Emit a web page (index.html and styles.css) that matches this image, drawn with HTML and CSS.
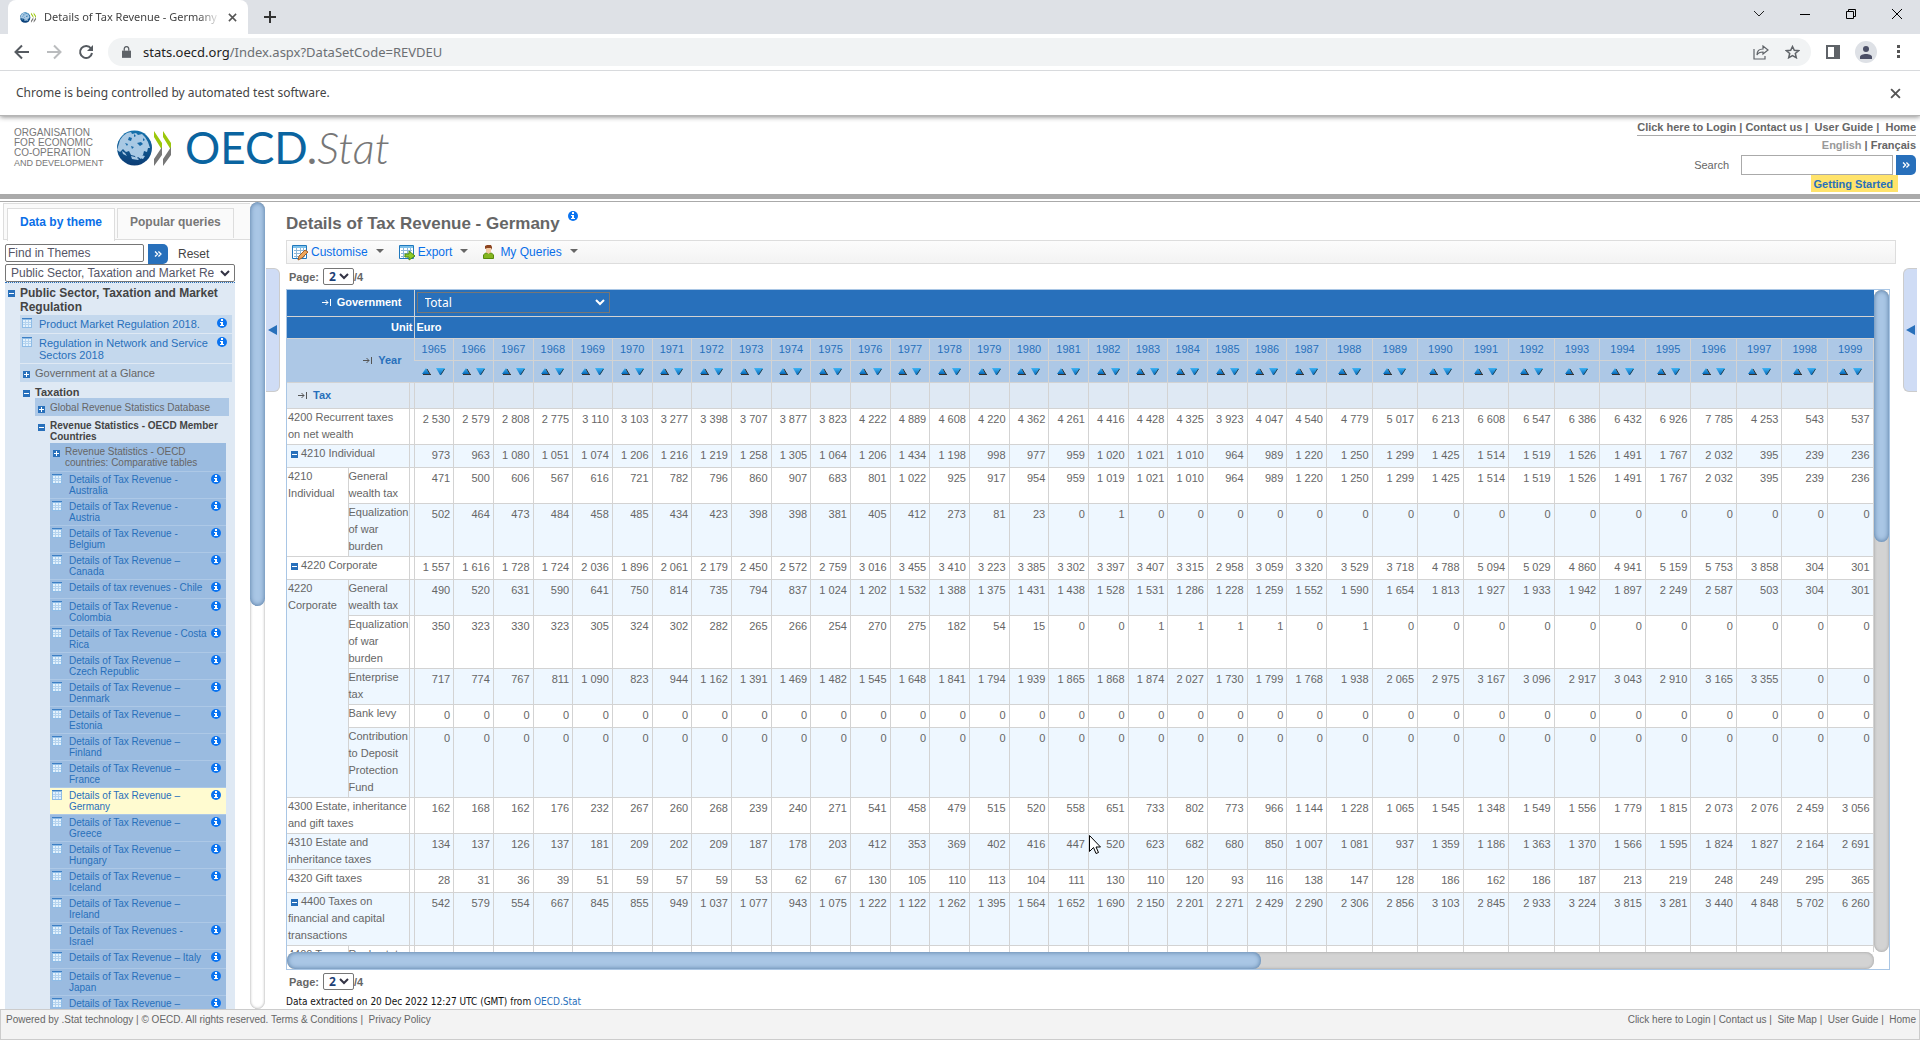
FILE: index.html
```html
<!DOCTYPE html>
<html lang="en">
<head>
  <meta charset="UTF-8" />
  <meta name="viewport" content="width=device-width, initial-scale=1.0"/>
  <title>Details of Tax Revenue - Germany</title>
  <link rel="stylesheet" href="styles.css">
</head>
<body>

  <svg class="sprite" aria-hidden="true">
    <linearGradient id="globeFill" x1="0" y1="0" x2="0" y2="1">
      <stop offset="0" stop-color="#1673ad"/><stop offset="1" stop-color="#0b3c74"/>
    </linearGradient>
    <linearGradient id="sortFill" x1="0" y1="0" x2="0" y2="1">
      <stop offset="0" stop-color="#3fb4f5"/><stop offset="1" stop-color="#0668b8"/>
    </linearGradient>
    <symbol id="logo" viewBox="0 0 54 36">
      <circle cx="17.500" cy="18" r="17.500" fill="url(#globeFill)"/>
      <path fill="#a9c9e4" d="M3 10l3-4 4-3 4-1 1 2 4-1 2 2 4-1 3 3 3 5 2 6-2 0-1 4-3-1-1 4-2 1 0 3-3-2-2 2-1-3-4-1-2-4-3 1-3-3-3 3-3-2z"/>
      <path fill="#a9c9e4" d="M14 26l4 1 4 2-1 1-6-1zM5 21l3 2 2 3-4-2zM24 25l4 1-2 3-3-1z"/>
      <path fill="#1668a5" d="M12 7l3 1-1 3-3-1zM20 13l4-1 2 2-3 2zM8 13l3 1-1 2zM17 4l2 2-2 1zM26 8l2 2-2 1zM14 16l3 1-2 2z"/>
      <path fill="#9bc70a" d="M37 1l8 12v7l-8-13zM46 1l8 12v7l-8-13z"/>
      <path fill="#777" d="M45 17v8l-8 11v-7zM54 17v8l-8 11v-7z"/>
    </symbol>
    <symbol id="info" viewBox="0 0 10 10">
      <circle cx="5" cy="5" r="5" fill="#0a73f0"/>
      <path fill="#fff" d="M4 1h2v2H4zM3 4h3v3h1v1H3V7h1V5H3z"/>
    </symbol>
    <symbol id="minus" viewBox="0 0 7 7"><path fill="#2870bb" d="M0 0h7v7H0z"/><path fill="#fff" d="M1 3h5v1H1z"/></symbol>
    <symbol id="plus" viewBox="0 0 7 7"><path fill="#2870bb" d="M0 0h7v7H0z"/><path fill="#fff" d="M1 3h5v1H1zM3 1h1v5H3z"/></symbol>
    <symbol id="sheet" viewBox="0 0 10 10">
      <path fill="#8fbce6" d="M0 0h10v10H0z"/><path fill="#e3f1fc" d="M1 2h8v7H1z"/><path fill="#3d7fc4" d="M0 0h10v1H0z"/>
      <path stroke="#b4d3ef" d="M1 4.500h8M1 6.500h8M3.500 2v7M6.500 2v7"/>
    </symbol>
    <symbol id="table" viewBox="0 0 16 15">
      <path fill="#fff" stroke="#1f78bd" d="M.5.5h14v13H.5z"/><path fill="#7fc1ea" d="M1 1h13v2H1z"/>
      <path stroke="#8db8d8" d="M2 5.500h11M2 8.500h11M2 11.500h11M4.500 3v10M8.500 3v10M11.500 3v10"/>
    </symbol>
    <symbol id="up" viewBox="0 0 9 7"><path fill="url(#sortFill)" d="M4 0l4 6H0z"/><path stroke="#333" d="M1 6.500h8M5 1l3 5" fill="none"/></symbol>
    <symbol id="down" viewBox="0 0 9 7"><path fill="url(#sortFill)" d="M0 0h9L5 7H4z"/><path stroke="#245" d="M8.500 1L5 6.500" fill="none"/></symbol>
    <symbol id="pivot" viewBox="0 0 9 7"><path fill="none" stroke="currentColor" d="M0 3.500h6M3.500 1L6 3.500 3.500 6M8.500 0v7"/></symbol>
    <symbol id="raquo" viewBox="0 0 8 7"><path fill="none" stroke="#fff" stroke-width="1.500" d="M.5.5l3 3-3 3M4.500.5l3 3-3 3"/></symbol>
    <symbol id="cross" viewBox="0 0 10 10"><path fill="none" stroke="#555" stroke-width="1.700" d="M1 1l8 8M9 1L1 9"/></symbol>
  </svg>

  <div class="browser">
    <div class="tabstrip">
      <div class="tab">
        <svg width="16" height="11"><use href="#logo"/></svg>
        <span class="tab-title">Details of Tax Revenue - Germany</span>
        <button aria-label="Close tab"><svg width="9" height="9"><use href="#cross"/></svg></button>
      </div>
      <button class="new-tab" aria-label="New tab"><svg width="12" height="12" viewBox="0 0 12 12"><path stroke="#333" stroke-width="2" d="M6 0v12M0 6h12"/></svg></button>
      <div class="window-buttons">
        <button aria-label="Search tabs"><svg width="10" height="6" viewBox="0 0 10 6"><path fill="none" stroke="#222" d="M0 0l5 5 5-5"/></svg></button>
        <button aria-label="Minimise"><svg width="10" height="10" viewBox="0 0 10 10"><path stroke="#000" d="M0 5.500h10"/></svg></button>
        <button aria-label="Restore"><svg width="10" height="10" viewBox="0 0 10 10"><path fill="none" stroke="#000" d="M.5 2.500h7v7h-7zM2.500 2V.5h7v7H8"/></svg></button>
        <button aria-label="Close"><svg width="10" height="10" viewBox="0 0 10 10"><path stroke="#000" d="M0 0l10 10M10 0L0 10"/></svg></button>
      </div>
    </div>
    <div class="toolbar">
      <button aria-label="Back"><svg width="16" height="16" viewBox="0 0 16 16"><path fill="none" stroke="#555a60" stroke-width="2" d="M15 8H2M8 1.500L1.500 8 8 14.500"/></svg></button>
      <button aria-label="Forward"><svg width="16" height="16" viewBox="0 0 16 16"><path fill="none" stroke="#babcbe" stroke-width="2" d="M1 8h13M8 1.500L14.500 8 8 14.500"/></svg></button>
      <button aria-label="Reload"><svg width="16" height="16" viewBox="0 0 16 16"><path fill="none" stroke="#555a60" stroke-width="2" d="M13 4.500A6 6 0 1 0 14 9"/><path fill="#555a60" d="M15 1v6H9z"/></svg></button>
      <div class="address">
        <svg width="9" height="12" viewBox="0 0 10 13"><path fill="#5f6368" d="M0 5h10v8H0z"/><path fill="none" stroke="#5f6368" stroke-width="1.500" d="M2.500 5V3a2.500 2.500 0 0 1 5 0v2"/></svg>
        <span class="url"><b>stats.oecd.org</b>/Index.aspx?DataSetCode=REVDEU</span>
        <svg width="16" height="15" viewBox="0 0 16 15"><path fill="none" stroke="#5f6368" stroke-width="1.200" d="M1 4v10h11v-3M4 10c0-4 2-6 6-6V1l5 4-5 4V7C7 7 5 8 4 10z"/></svg>
        <svg class="star" width="15" height="14" viewBox="0 0 15 14"><path fill="none" stroke="#5f6368" stroke-width="1.500" d="M7.500 1.500l1.800 3.800 4.200.4-3.200 2.800 1 4.200-3.800-2.200-3.800 2.200 1-4.200L1.500 5.700l4.200-.4z"/></svg>
      </div>
      <button aria-label="Side panel"><svg width="14" height="14" viewBox="0 0 14 14"><path fill="#5f6368" d="M0 0h14v14H0z"/><path fill="#fff" d="M2 2h6v10H2z"/></svg></button>
      <button class="avatar" aria-label="Profile"><svg width="12" height="13" viewBox="0 0 12 13"><circle cx="6" cy="3" r="3" fill="#4b4f66"/><path fill="#4b4f66" d="M0 13v-2c0-2 3-3 6-3s6 1 6 3v2z"/></svg></button>
      <button aria-label="Menu"><svg width="4" height="14" viewBox="0 0 4 14"><path fill="#555" d="M0 0h3v3H0zM0 5h3v3H0zM0 10h3v3H0z"/></svg></button>
    </div>
    <div class="infobar">
      <span>Chrome is being controlled by automated test software.</span>
      <button aria-label="Dismiss"><svg width="11" height="11"><use href="#cross"/></svg></button>
    </div>
  </div>

  <header class="site-header">
    <div class="brand">
      <div class="org">ORGANISATION<br>FOR ECONOMIC<br>CO-OPERATION<br><small>AND DEVELOPMENT</small></div>
      <svg width="54" height="36"><use href="#logo"/></svg>
      <div class="wordmark">OECD<span>.</span><i>Stat</i></div>
    </div>
    <div class="header-tools">
      <nav class="top-links"><a href="#">Click here to Login</a> | <a href="#">Contact us</a> |&nbsp; <a href="#">User Guide</a> |&nbsp; <a href="#">Home</a></nav>
      <div class="lang"><span>English</span> | <a href="#">Français</a></div>
      <form class="search">
        <label for="search">Search</label>
        <input type="text" id="search">
        <button type="button" class="go" aria-label="Search"><svg width="8" height="6"><use href="#raquo"/></svg></button>
      </form>
      <a class="started" href="#">Getting Started</a>
    </div>
  </header>

  <main>
    <aside class="themes">
      <div class="theme-tabs">
        <a href="#" class="active">Data by theme</a>
        <a href="#">Popular queries</a>
      </div>
      <div class="theme-body">
        <div class="find">
          <input type="text" id="find" aria-label="Find in Themes" value="Find in Themes">
          <button class="go" aria-label="Find"><svg width="8" height="6"><use href="#raquo"/></svg></button>
          <a href="#">Reset</a>
        </div>
        <select class="theme-select" aria-label="Theme"><option>Public Sector, Taxation and Market Regulation</option></select>
        <div class="tree">
          <div class="node root"><svg width="7" height="7"><use href="#minus"/></svg><span>Public Sector, Taxation and Market Regulation</span></div>
          <div class="level one">
            <div class="leaf"><svg width="10" height="10"><use href="#sheet"/></svg><a href="#">Product Market Regulation 2018.</a><svg width="10" height="10"><use href="#info"/></svg></div>
            <div class="leaf"><svg width="10" height="10"><use href="#sheet"/></svg><a href="#">Regulation in Network and Service Sectors 2018</a><svg width="10" height="10"><use href="#info"/></svg></div>
            <div class="node closed"><svg width="7" height="7"><use href="#plus"/></svg><span>Government at a Glance</span></div>
            <div class="node open"><svg width="7" height="7"><use href="#minus"/></svg><span>Taxation</span></div>
            <div class="level two">
              <div class="node closed"><svg width="7" height="7"><use href="#plus"/></svg><span>Global Revenue Statistics Database</span></div>
              <div class="node open"><svg width="7" height="7"><use href="#minus"/></svg><span>Revenue Statistics - OECD Member Countries</span></div>
              <div class="level three" id="countries">
                <div class="node closed"><svg width="7" height="7"><use href="#plus"/></svg><span>Revenue Statistics - OECD countries: Comparative tables</span></div>
              </div>
            </div>
          </div>
        </div>
      </div>
    </aside>
    <div class="bar vertical light"><div class="thumb half"></div></div>
    <button class="flap left" aria-label="Hide themes"><svg width="9" height="10" viewBox="0 0 9 10"><path fill="#2870bb" d="M9 0v10L0 5z"/></svg></button>

    <section class="dataset">
      <h1>Details of Tax Revenue - Germany <svg width="10" height="10"><use href="#info"/></svg></h1>
      <div class="actions">
        <a href="#"><svg width="16" height="15"><use href="#table"/><path d="M6 15l1-4 6-6 3 2-6 6z" fill="#eda75c" stroke="#a2602a"/></svg>Customise<i></i></a>
        <a href="#"><svg width="16" height="15"><use href="#table"/><path d="M6 9h4V6l6 5-6 4v-3H6z" fill="#8fcb28" stroke="#4c8a10"/></svg>Export<i></i></a>
        <a href="#" class="queries"><svg width="11" height="14" viewBox="0 0 11 14"><path fill="#84b51e" stroke="#588a0c" d="M.5 13.500V10l2-2h6l2 2v3.500z"/><path fill="#f1c9a2" d="M3 2h5v5L5.500 9 3 7z"/><path fill="#8c4420" d="M2 4V1l2-1h4l1 2v3L8 3H4z"/></svg>My Queries<i></i></a>
      </div>
      <div class="pager"><label for="page-top">Page:</label> <select id="page-top"><option>2</option></select>/4</div>

      <div class="grid-box">
        <div class="grid-view">
          <table class="grid">
            <colgroup id="cols"><col class="c-main"><col class="c-sub"><col class="c-gap"></colgroup>
            <thead>
              <tr class="dark tall">
                <th colspan="3" class="dim"><svg width="9" height="7"><use href="#pivot"/></svg>Government</th>
                <th colspan="36" class="value"><select aria-label="Government"><option>Total</option></select></th>
              </tr>
              <tr class="dark">
                <th colspan="3" class="unit">Unit</th>
                <th colspan="36" class="value">Euro</th>
              </tr>
              <tr class="years" id="years"><th colspan="3" rowspan="2" class="dim"><svg width="9" height="7"><use href="#pivot"/></svg>Year</th></tr>
              <tr class="years" id="sorts"></tr>
              <tr class="spacer" id="taxrow"><th colspan="2" class="tax"><svg width="9" height="7"><use href="#pivot"/></svg>Tax</th></tr>
            </thead>
            <tbody id="rows"></tbody>
          </table>
        </div>
        <div class="bar vertical"><div class="thumb"></div></div>
        <div class="bar horizontal"><div class="thumb"></div></div>
      </div>

      <div class="pager bottom"><label for="page-bottom">Page:</label> <select id="page-bottom"><option>2</option></select>/4</div>
      <p class="extracted">Data extracted on 20 Dec 2022 12:27 UTC (GMT) from <a href="#">OECD.Stat</a></p>
    </section>
    <button class="flap right" aria-label="Show panel"><svg width="9" height="10" viewBox="0 0 9 10"><path fill="#2870bb" d="M9 0v10L0 5z"/></svg></button>
  </main>

  <footer>
    <div>Powered by .Stat technology | © OECD. All rights reserved. <a href="#">Terms &amp; Conditions</a> |&nbsp; <a href="#">Privacy Policy</a></div>
    <nav><a href="#">Click here to Login</a> | <a href="#">Contact us</a> |&nbsp; <a href="#">Site Map</a> |&nbsp; <a href="#">User Guide</a> |&nbsp; <a href="#">Home</a></nav>
  </footer>

  <svg class="pointer" width="12" height="20" viewBox="0 0 12 20"><path fill="#fff" stroke="#000" d="M.5.5v16l4-4 2.500 6 2.500-1-2.500-5.500h4.500z"/></svg>

  <script src="script.js"></script>
</body>
</html>
```
FILE: styles.css
```css
* { margin: 0; padding: 0; box-sizing: border-box; }
body { height: 100vh; display: flex; flex-direction: column; overflow: hidden; background: #fff; color: #666; font: 11px/14px "Liberation Sans", Arial, sans-serif; }
a { color: inherit; text-decoration: none; }
button { border: 0; background: none; display: flex; align-items: center; justify-content: center; cursor: pointer; }
input, select { font: 12px "Liberation Sans", Arial, sans-serif; color: #556; background: #fff; border: 1px solid #767676; border-radius: 2px; }
select { appearance: none; background: #fff url("data:image/svg+xml,%3Csvg xmlns='http://www.w3.org/2000/svg' width='10' height='7'%3E%3Cpath d='M1 1l4 4 4-4' fill='none' stroke='%23334' stroke-width='2'/%3E%3C/svg%3E") no-repeat right 4px center; }
svg { flex: none; }
.sprite { position: absolute; width: 0; height: 0; }

/* browser window */
.browser { font-family: "Noto Sans", "Open Sans", sans-serif; flex: none; position: relative; box-shadow: 0 1px 5px #888; border-bottom: 1px solid #b5b5b5; }
.tabstrip { height: 34px; background: #dee1e6; display: flex; padding-left: 8px; }
.tab { width: 240px; background: #fff; border-radius: 8px 8px 0 0; display: flex; align-items: center; gap: 8px; padding: 0 11px 0 12px; color: #444; }
.tab-title { flex: 1; font-size: 11px; white-space: nowrap; -webkit-mask-image: linear-gradient(90deg, #000 88%, transparent); mask-image: linear-gradient(90deg, #000 88%, transparent); }
.new-tab { width: 44px; }
.window-buttons { margin-left: auto; display: flex; }
.window-buttons button { width: 46px; height: 28px; }
.toolbar { height: 37px; display: flex; align-items: center; padding: 0 5px 0 6px; border-bottom: 1px solid #d8dadd; }
.toolbar button { width: 32px; height: 30px; }
.toolbar .avatar { width: 22px; height: 22px; margin: 0 6px; border-radius: 50%; background: #dee1e6; }
.address { flex: 1; height: 28px; margin: 0 6px; border-radius: 14px; background: #f1f3f4; display: flex; align-items: center; gap: 12px; padding: 0 11px 0 14px; }
.star { margin-left: 4px; }
.url { flex: 1; font-size: 13px; line-height: 20px; color: #6b6f73; }
.url b { font-weight: normal; color: #222; }
.infobar { height: 44px; display: flex; align-items: center; justify-content: space-between; padding: 0 19px 0 16px; font-size: 12px; color: #444; }

/* site header */
.site-header { flex: none; height: 86px; display: flex; justify-content: space-between; padding: 0 4px 0 14px; border-bottom: 1px solid #aaa; background: linear-gradient(#aaa, #aaa) 0 78px / 100% 5px no-repeat; }
.brand { display: flex; gap: 14px; padding-top: 12px; }
.org { width: 89px; font-size: 10px; line-height: 10px; color: #777; white-space: nowrap; }
.org small { font-size: 9px; }
.org + svg { margin-top: 2px; }
.wordmark { font: 44px/38px Lato, sans-serif; color: #0a64a0; }
.wordmark span, .wordmark i { color: #777; }
.wordmark i { font-weight: 300; }
.header-tools { display: flex; flex-direction: column; align-items: flex-end; }
.top-links, .lang, .started { font-weight: bold; }
.top-links { line-height: 16px; padding-top: 3px; border-bottom: 1px solid #aaa; }
.lang { line-height: 18px; }
.lang span { color: #999; }
.search { display: flex; align-items: center; margin-top: 1px; }
.search label { margin-right: 12px; }
.search input { width: 152px; height: 20px; margin-right: 3px; border: 1px solid #aaa; border-radius: 0; }
.go { width: 20px; height: 20px; background: #2870bb; border-radius: 0 5px 5px 0; }
.started { margin-right: 18px; padding: 2px 5px 1px 3px; background: #ffe36b; color: #2870bb; }

/* page body */
main { flex: 1; min-height: 0; display: flex; position: relative; }
.themes { width: 250px; padding-left: 3px; overflow: hidden; flex: none; }
.theme-tabs { height: 37px; margin-top: 1px; border: 1px solid #ddd; border-width: 1px 0 1px 1px; background: #fafafa; display: flex; gap: 2px; padding: 4px 0 0 3px; }
.theme-tabs a { padding: 0 12px; height: 30px; line-height: 27px; border: 1px solid #ddd; border-bottom: 0; font-size: 12px; font-weight: bold; color: #777; }
.theme-tabs .active { height: 33px; margin-bottom: -1px; background: #fff; color: #0a6fe8; }
.theme-body { width: 232px; padding: 4px 0 0 2px; }
.find { display: flex; align-items: center; height: 20px; font-size: 12px; color: #444; }
.find input { width: 139px; height: 18px; padding-left: 2px; margin-right: 4px; align-self: flex-start; }
.find a { margin-left: 10px; }
.theme-select { width: 100%; height: 18px; padding: 0 20px 0 5px; display: block; }
.tree { background: #dfe9f4; border-top: 1px dotted #2870bb; padding: 3px 3px 0 0; }
.node, .leaf { display: flex; align-items: flex-start; }
.node svg { margin: 4px 5px 0 3px; }
.root { font-size: 12px; line-height: 14px; font-weight: bold; color: #444; }
.level { margin-left: 15px; }
.leaf a { flex: 1; color: #2870bb; }
.leaf svg:first-child { margin: 0 7px 0 2px; }
.leaf svg:last-child { margin-right: 5px; }
.one { line-height: 12px; padding-top: 1px; }
.one > .leaf, .one > .closed { background: #c4d8ed; border-bottom: 1px solid #dfe9f4; padding: 3px 0 2px; min-height: 19px; }
.open { font-weight: bold; color: #444; }
.one > .open { padding-top: 3px; }
.two { font-size: 10px; line-height: 11px; margin-right: 3px; }
.two > .closed { background: #adc8e6; padding: 4px 0; height: 18px; }
.two > .open { padding: 4px 0 1px; }
.three { margin-right: 3px; }
.three > .closed { background: #9abbe0; padding: 3px 0; border-bottom: 1px solid #adc8e6; }
.three .leaf { background: #9abbe0; border-bottom: 1px solid #adc8e6; padding: 2px 0; min-height: 19px; }
.three .leaf a { margin-right: 2px; }
.three .current { background: #fffbd0; }

/* scroll bars */
.bar { background: #d3d3d3; box-shadow: inset 0 0 3px #999; border-radius: 8px; overflow: hidden; }
.thumb { background: #a9c6e5; border-radius: 8px; box-shadow: inset 0 0 5px #4d739c; }
.vertical { width: 15px; flex: none; }
.vertical .thumb { height: 38%; }
.horizontal .thumb { width: 61.4%; height: 100%; }
.light { background: #fff; }
.vertical .half { height: 50%; }
.flap { width: 14px; height: 124px; margin-top: 66px; flex: none; background: #cfdcf5; border: 1px solid #ccc; }
.flap.left { border-left: 0; border-radius: 0 6px 6px 0; margin-right: 6px; margin-left: 1px; }
.flap.right { border-right: 0; border-radius: 6px 0 0 6px; margin-right: 3px; }

/* dataset */
.dataset { flex: 1; min-width: 0; display: flex; flex-direction: column; padding-right: 7px; }
h1 { font-size: 17px; line-height: 20px; padding-top: 9px; margin-bottom: 6px; }
h1 svg { vertical-align: 8px; margin-left: 4px; }
.actions { height: 24px; border: 1px solid #ddd; background: linear-gradient(#fcfcfc, #f3f3f3); display: flex; align-items: center; gap: 15px; padding-left: 5px; font-size: 12px; color: #0a6fe8; }
.actions a { display: flex; align-items: center; gap: 3px; }
.actions svg { overflow: visible; }
.actions i { border: 4px solid transparent; border-top-color: #666; margin: 2px 0 0 5px; }
.queries svg { margin-right: 3px; }
.pager { display: flex; align-items: center; height: 25px; padding-left: 3px; font-weight: bold; }
.pager select { width: 31px; height: 17px; margin-left: 4px; padding-left: 5px; font: bold 12px "Noto Sans", sans-serif; line-height: 15px; color: #1c4076; }
.pager.bottom { padding-bottom: 2px; }
.extracted { font: 10px/14px "DejaVu Sans Condensed", "DejaVu Sans", sans-serif; color: #111; }
.extracted a { color: #2870bb; }

.grid-box { flex: 1; min-height: 0; margin-right: 6px; border: 1px solid #a9c6e5; display: grid; grid-template: 1fr 17px / 1fr 15px; }
.grid-view { overflow: hidden; }
.grid { width: 100%; table-layout: fixed; border-collapse: collapse; line-height: 17px; }
.c-main { width: 61px; }
.c-sub { width: 61px; }
.c-gap { width: 5px; }
.c-early { width: 2.5%; }
.c-late { width: 2.87%; }
.grid th, .grid td { border: 1px solid #d3d3d3; border-width: 1px 0 0 1px; vertical-align: top; }
.grid tr > :first-child:not(.sub) { border-left-width: 0; }
.grid thead tr:first-child th { border-top: 0; }
.grid thead th { height: 22px; vertical-align: middle; }
.grid .tall th { height: 26px; }
.dark { background: #2870bb; color: #fff; }
.dim { text-align: right; padding-right: 12px; }
.dim svg, .tax svg { margin-right: 6px; }
.unit { text-align: right; padding-right: 1px; }
.value { text-align: left; padding-left: 2px; }
.value select { display: block; width: 193px; height: 21px; padding-left: 7px; border-radius: 0; color: #fff; font: 12px "Noto Sans", sans-serif; background: #2870bb url("data:image/svg+xml,%3Csvg xmlns='http://www.w3.org/2000/svg' width='10' height='7'%3E%3Cpath d='M1 1l4 4 4-4' fill='none' stroke='%23fff' stroke-width='2'/%3E%3C/svg%3E") no-repeat right 4px center; }
.years { background: #adc8e6; color: #2870bb; }
.years th { font-weight: normal; }
.years .dim { font-weight: bold; }
.years .dim svg, .tax svg { color: #555; }
.sort { display: flex; justify-content: center; gap: 5px; }
.spacer { background: #dfe9f4; color: #2870bb; }
.grid .spacer th { height: 26px; }
.tax { text-align: left; padding-left: 11px; }
.grid tbody th { font-weight: normal; text-align: left; padding-bottom: 1px; }
.grid tbody th[colspan], .grid tbody th[rowspan] { padding-left: 1px; }
.grid tbody th[colspan] { padding-right: 1px; }
.grid tbody th svg { margin: 0 3px 0 3px; vertical-align: -1px; }
.grid td { text-align: right; white-space: nowrap; padding: 2px 3px 3px 0; }
.grid tbody tr:nth-child(even) { background: #eef7ff; }

footer { flex: none; height: 31px; border: 1px solid #ccc; background: #f3f3f3; display: flex; justify-content: space-between; padding: 3px 3px 0 5px; font-size: 10px; }
.pointer { position: absolute; left: 1089px; top: 835px; }
```
FILE: script.js
```js
const use = (id, w, h) => `<svg width="${w}" height="${h}"><use href="#${id}"/></svg>`;

// country list: [title, has info icon]
const countries = [
  ['Details of Tax Revenue - Australia', 1], ['Details of Tax Revenue - Austria', 1],
  ['Details of Tax Revenue - Belgium', 1], ['Details of Tax Revenue – Canada', 1],
  ['Details of tax revenues - Chile', 1], ['Details of Tax Revenue - Colombia', 1],
  ['Details of Tax Revenue - Costa Rica', 1], ['Details of Tax Revenue – Czech Republic', 1],
  ['Details of Tax Revenue – Denmark', 1], ['Details of Tax Revenue – Estonia', 1],
  ['Details of Tax Revenue – Finland', 1], ['Details of Tax Revenue – France', 1],
  ['Details of Tax Revenue – Germany', 1], ['Details of Tax Revenue – Greece', 1],
  ['Details of Tax Revenue – Hungary', 1], ['Details of Tax Revenue – Iceland', 1],
  ['Details of Tax Revenue – Ireland', 0], ['Details of Tax Revenues - Israel', 1],
  ['Details of Tax Revenue – Italy', 1], ['Details of Tax Revenue – Japan', 1],
  ['Details of Tax Revenue – Korea', 1]
];

document.getElementById('countries').insertAdjacentHTML('beforeend', countries.map(([title, info]) => `
  <div class="leaf${title.includes('Germany') ? ' current' : ''}">
    ${use('sheet', 10, 10)}<a href="#">${title}</a>${info ? use('info', 10, 10) : '<svg width="10" height="10"></svg>'}
  </div>`).join(''));

// table head
const years = Array.from({ length: 35 }, (_, i) => 1965 + i);

document.getElementById('cols').insertAdjacentHTML('beforeend',
  years.map(y => `<col class="${y < 1988 ? 'c-early' : 'c-late'}">`).join('') + '<col>');
document.getElementById('years').insertAdjacentHTML('beforeend',
  years.map(y => `<th>${y}</th>`).join('') + '<th></th>');
document.getElementById('sorts').innerHTML = years.map(y => `<th><div class="sort">
  <button aria-label="Sort ${y} ascending">${use('up', 9, 7)}</button>
  <button aria-label="Sort ${y} descending">${use('down', 9, 7)}</button></div></th>`).join('') + '<th></th>';
document.getElementById('taxrow').insertAdjacentHTML('beforeend', '<th></th>'.repeat(37));

// row heads: s = spans both label columns, m = same with a minus box, g = group with n sub rows, sub = second label column
const zeros = Array(35).fill(0).join(' ');
const rows = [
  { s: '4200 Recurrent taxes on net wealth', v: '2530 2579 2808 2775 3110 3103 3277 3398 3707 3877 3823 4222 4889 4608 4220 4362 4261 4416 4428 4325 3923 4047 4540 4779 5017 6213 6608 6547 6386 6432 6926 7785 4253 543 537' },
  { m: '4210 Individual', v: '973 963 1080 1051 1074 1206 1216 1219 1258 1305 1064 1206 1434 1198 998 977 959 1020 1021 1010 964 989 1220 1250 1299 1425 1514 1519 1526 1491 1767 2032 395 239 236' },
  { g: '4210 Individual', n: 2, sub: 'General wealth tax', v: '471 500 606 567 616 721 782 796 860 907 683 801 1022 925 917 954 959 1019 1021 1010 964 989 1220 1250 1299 1425 1514 1519 1526 1491 1767 2032 395 239 236' },
  { sub: 'Equalization of war burden', v: '502 464 473 484 458 485 434 423 398 398 381 405 412 273 81 23 0 1 0 0 0 0 0 0 0 0 0 0 0 0 0 0 0 0 0' },
  { m: '4220 Corporate', v: '1557 1616 1728 1724 2036 1896 2061 2179 2450 2572 2759 3016 3455 3410 3223 3385 3302 3397 3407 3315 2958 3059 3320 3529 3718 4788 5094 5029 4860 4941 5159 5753 3858 304 301' },
  { g: '4220 Corporate', n: 5, sub: 'General wealth tax', v: '490 520 631 590 641 750 814 735 794 837 1024 1202 1532 1388 1375 1431 1438 1528 1531 1286 1228 1259 1552 1590 1654 1813 1927 1933 1942 1897 2249 2587 503 304 301' },
  { sub: 'Equalization of war burden', v: '350 323 330 323 305 324 302 282 265 266 254 270 275 182 54 15 0 0 1 1 1 1 0 1 0 0 0 0 0 0 0 0 0 0 0' },
  { sub: 'Enterprise tax', v: '717 774 767 811 1090 823 944 1162 1391 1469 1482 1545 1648 1841 1794 1939 1865 1868 1874 2027 1730 1799 1768 1938 2065 2975 3167 3096 2917 3043 2910 3165 3355 0 0' },
  { sub: 'Bank levy', v: zeros },
  { sub: 'Contribution to Deposit Protection Fund', v: zeros },
  { s: '4300 Estate, inheritance and gift taxes', v: '162 168 162 176 232 267 260 268 239 240 271 541 458 479 515 520 558 651 733 802 773 966 1144 1228 1065 1545 1348 1549 1556 1779 1815 2073 2076 2459 3056' },
  { s: '4310 Estate and inheritance taxes', v: '134 137 126 137 181 209 202 209 187 178 203 412 353 369 402 416 447 520 623 682 680 850 1007 1081 937 1359 1186 1363 1370 1566 1595 1824 1827 2164 2691' },
  { s: '4320 Gift taxes', v: '28 31 36 39 51 59 57 59 53 62 67 130 105 110 113 104 111 130 110 120 93 116 138 147 128 186 162 186 187 213 219 248 249 295 365' },
  { m: '4400 Taxes on financial and capital transactions', v: '542 579 554 667 845 855 949 1037 1077 943 1075 1222 1122 1262 1395 1564 1652 1690 2150 2201 2271 2429 2290 2306 2856 3103 2845 2933 3224 3815 3281 3440 4848 5702 6260' },
  { g: '4400 Taxes on financial', n: 1, sub: 'Real estate', v: '' }
];

const format = n => n.replace(/\B(?=\d{3}$)/, ' ');

document.getElementById('rows').innerHTML = rows.map(r => {
  let head = '';
  if (r.s) head = `<th colspan="2">${r.s}</th>`;
  if (r.m) head = `<th colspan="2">${use('minus', 7, 7)}${r.m}</th>`;
  if (r.g) head = `<th rowspan="${r.n}">${r.g}</th>`;
  if (r.sub) head += `<th class="sub">${r.sub}</th>`;
  const values = r.v ? r.v.split(' ') : Array(35).fill('');
  return `<tr>${head}<td></td>${values.map(v => `<td>${format(v)}</td>`).join('')}<td></td></tr>`;
}).join('');
```
